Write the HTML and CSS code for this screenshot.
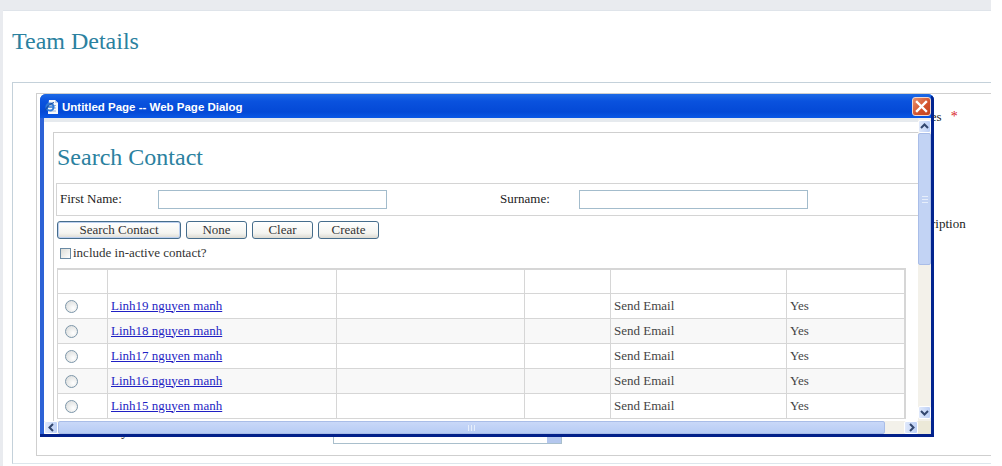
FILE: index.html
```html
<!DOCTYPE html>
<html lang="en">
<head>
<meta charset="utf-8">
<title>Team Details</title>
<link rel="stylesheet" href="styles.css">
</head>
<body>
<main class="page">
  <h1 class="page-title">Team Details</h1>
  <section class="outer">
    <div class="inner">
      <div class="behind-row behind-first"><span class="behind-label">Roles</span><span class="req">*</span></div>
      <div class="behind-row behind-second"><span class="behind-label">Description</span></div>
      <div class="behind-row behind-third"><span class="behind-key">Key</span><span class="behind-select"><span class="behind-arrow"></span></span></div>
    </div>
  </section>
</main>

<div class="dialog">
  <header class="titlebar">
    <svg class="ie-icon" width="16" height="16" viewBox="0 0 16 16">
      <path d="M5 1h6l3 3v11H4V9z" fill="#f6f8fb"/>
      <path d="M11 1v3h3" fill="#c4d2e8"/>
      <path d="M6 6.5h6M8 9h4M6 12h6" stroke="#9db4d6" stroke-width="1"/>
      <circle cx="6" cy="8" r="3.6" fill="none" stroke="#2f7ad6" stroke-width="2"/>
      <path d="M2.6 8h6.6" stroke="#2f7ad6" stroke-width="1.4"/>
      <path d="M1 11.5C3 8 6 4.5 10 3.5" fill="none" stroke="#174ea6" stroke-width="1.2"/>
    </svg>
    <span class="titlebar-text">Untitled Page -- Web Page Dialog</span>
    <button class="close" type="button" aria-label="Close">
      <svg width="13" height="13" viewBox="0 0 13 13"><path d="M2 2l9 9M11 2l-9 9" stroke="#fff" stroke-width="2.4" stroke-linecap="square"/></svg>
    </button>
  </header>
  <div class="client">
    <div class="viewport">
      <div class="strip"></div>
      <div class="box">
        <h2 class="dialog-title">Search Contact</h2>
        <div class="filter">
          <label class="f-label f-first">First Name:</label>
          <input class="f-input" type="text">
          <label class="f-label f-second">Surname:</label>
          <input class="f-input" type="text">
        </div>
        <div class="actions">
          <button class="btn btn-default" type="button">Search Contact</button>
          <button class="btn" type="button">None</button>
          <button class="btn" type="button">Clear</button>
          <button class="btn" type="button">Create</button>
        </div>
        <div class="inactive"><span class="check"></span><span>include in-active contact?</span></div>
        <table class="grid">
          <colgroup>
            <col class="c1"><col class="c2"><col class="c3"><col class="c4"><col class="c5"><col class="c6"><col class="c7">
          </colgroup>
          <thead><tr><th></th><th></th><th></th><th></th><th></th><th></th><th></th></tr></thead>
          <tbody>
            <tr><td class="rc"><span class="radio"></span></td><td><a href="#">Linh19 nguyen manh</a></td><td></td><td></td><td>Send Email</td><td>Yes</td><td></td></tr>
            <tr class="alt"><td class="rc"><span class="radio"></span></td><td><a href="#">Linh18 nguyen manh</a></td><td></td><td></td><td>Send Email</td><td>Yes</td><td></td></tr>
            <tr><td class="rc"><span class="radio"></span></td><td><a href="#">Linh17 nguyen manh</a></td><td></td><td></td><td>Send Email</td><td>Yes</td><td></td></tr>
            <tr class="alt"><td class="rc"><span class="radio"></span></td><td><a href="#">Linh16 nguyen manh</a></td><td></td><td></td><td>Send Email</td><td>Yes</td><td></td></tr>
            <tr><td class="rc"><span class="radio"></span></td><td><a href="#">Linh15 nguyen manh</a></td><td></td><td></td><td>Send Email</td><td>Yes</td><td></td></tr>
          </tbody>
        </table>
      </div>
    </div>
    <div class="vscroll">
      <span class="sb-btn sb-v"><svg width="9" height="7" viewBox="0 0 9 7"><path d="M1 5l3.5-3.5L8 5" fill="none" stroke="#33476e" stroke-width="2"/></svg></span>
      <span class="v-thumb"><span class="v-grip"></span></span>
      <span class="v-track"></span>
      <span class="sb-btn sb-v"><svg width="9" height="7" viewBox="0 0 9 7"><path d="M1 2l3.5 3.5L8 2" fill="none" stroke="#33476e" stroke-width="2"/></svg></span>
    </div>
    <div class="hscroll">
      <span class="sb-btn sb-h"><svg width="7" height="9" viewBox="0 0 7 9"><path d="M5 1L1.5 4.5 5 8" fill="none" stroke="#33476e" stroke-width="2"/></svg></span>
      <span class="h-thumb"><span class="h-grip"></span></span>
      <span class="h-track"></span>
      <span class="sb-btn sb-h"><svg width="7" height="9" viewBox="0 0 7 9"><path d="M2 1l3.5 3.5L2 8" fill="none" stroke="#33476e" stroke-width="2"/></svg></span>
    </div>
    <div class="corner"></div>
  </div>
</div>
</body>
</html>
```

FILE: styles.css
```css
* { box-sizing: border-box; }
html, body { margin: 0; height: 466px; overflow: hidden; }
body {
  background: #fff;
  font-family: "Liberation Serif", serif;
  font-size: 13px;
  color: #222;
  position: relative;
}
.page {
  width: 991px;
  height: 466px;
  padding: 10px 0 0 3px;
  background: #e9ebef;
}
.page-title {
  margin: 0;
  height: 72px;
  background: #fff;
  border-top: 1px solid #dfe4ea;
  padding: 15px 0 0 9px;
  font-size: 24px;
  line-height: 30px;
  font-weight: normal;
  color: #2b819f;
}
.outer {
  height: 384px;
  padding: 0 0 2px 9px;
  background: #fff;
}
.inner {
  height: 382px;
  border: 1px solid #c4d1da;
  border-bottom-color: #dde6ec;
  border-right: 0;
  padding: 10px 0 0 23px;
  position: relative;
}
.inner::before {
  content: "";
  display: block;
  height: 361px;
  border: 1px solid #cfcfcf;
  border-right: 0;
  margin-bottom: -363px;
}
.behind-row { position: absolute; white-space: nowrap; }
.behind-first { left: 899px; top: 26px; }
.behind-second { left: 892px; top: 133px; }
.behind-third { left: 93px; top: 341px; width: 500px; height: 20px; }
.req { color: #d9262a; margin-left: 9px; font-size: 14px; }
.behind-select {
  position: absolute;
  left: 227px;
  top: 0;
  width: 229px;
  height: 20px;
  border: 1px solid #a9bfcc;
}
.behind-arrow {
  position: absolute;
  right: 0;
  top: 0;
  bottom: 0;
  width: 14px;
  background: #b4c7ee;
}

.dialog {
  position: absolute;
  left: 40px;
  top: 94px;
  width: 894px;
  height: 343px;
  display: flex;
  flex-direction: column;
  border-radius: 6px 6px 0 0;
  background: #2d62d6;
  overflow: hidden;
}
.titlebar {
  height: 24px;
  flex: none;
  display: flex;
  align-items: center;
  padding: 1px 3px 0 4px;
  background: linear-gradient(#1d6ae6, #0a52de 30%, #0449d6 75%, #0a58e6);
}
.ie-icon { flex: none; }
.titlebar-text {
  margin-left: 2px;
  color: #fff;
  font-family: "Liberation Sans", sans-serif;
  font-size: 11.5px;
  font-weight: bold;
}
.close {
  margin-left: auto;
  margin-top: -1px;
  width: 19px;
  height: 19px;
  padding: 0;
  display: flex;
  align-items: center;
  justify-content: center;
  border: 1px solid #f2d8cc;
  border-radius: 3px;
  background: linear-gradient(135deg, #e9916e, #d2502a 60%, #c24520);
}
.client {
  flex: 1;
  margin: 0 3px 3px 4px;
  background: #fff;
  display: grid;
  grid-template-columns: 874px 13px;
  grid-template-rows: 303px 13px;
}
.dialog::after {
  content: "";
  position: absolute;
  top: 2px;
  right: 0;
  bottom: 0;
  width: 3px;
  background: #02248f;
}
.dialog::before {
  content: "";
  position: absolute;
  left: 0;
  right: 0;
  bottom: 0;
  height: 3px;
  background: #02208a;
  z-index: 1;
}
.viewport { overflow: hidden; background: #fff; }
.strip { height: 4px; background: #e6eaee; }
.box {
  margin: 10px 0 0 9px;
  border: 1px solid #cfcfcf;
  border-right: 0;
  border-bottom: 0;
  height: 400px;
  padding-left: 3px;
}
.dialog-title {
  margin: 0;
  height: 50px;
  padding: 9px 0 0 0;
  font-size: 24px;
  line-height: 30px;
  font-weight: normal;
  color: #2b819f;
}
.filter {
  height: 33px;
  border: 1px solid #d4d4d4;
  border-width: 1px 0 1px 1px;
  margin-left: -1px;
  padding: 0 0 1px 3px;
  display: flex;
  align-items: center;
}
.f-label { display: block; }
.f-first { width: 98px; }
.f-second { margin-left: 113px; width: 79px; }
.f-input {
  width: 229px;
  height: 19px;
  padding: 0;
  border: 1px solid #a3bccc;
  background: #fff;
  outline: 0;
}
.actions {
  display: flex;
  gap: 5px;
  margin-top: 5px;
  height: 18px;
}
.btn {
  width: 61px;
  height: 18px;
  padding: 0;
  font: 13px "Liberation Serif", serif;
  color: #333;
  border: 1px solid #466d8c;
  border-radius: 3px;
  background: linear-gradient(#fff, #f4f4f0 70%, #dcdad2);
}
.btn-default {
  width: 124px;
  box-shadow: inset 0 0 0 1px #bcd0f0;
}
.inactive {
  display: flex;
  align-items: center;
  height: 12px;
  margin: 8px 0 0 3px;
  gap: 2px;
  color: #333;
}
.check {
  width: 11px;
  height: 11px;
  border: 1px solid #6a8aa4;
  background: linear-gradient(135deg, #dcdcd6, #fff);
}
.grid {
  margin: 9px 0 0 0;
  border-collapse: collapse;
  table-layout: fixed;
  width: 848px;
}
.c1 { width: 50px; }
.c2 { width: 229px; }
.c3 { width: 188px; }
.c4 { width: 86px; }
.c5 { width: 176px; }
.c6 { width: 118px; }
.c7 { width: 1px; }
.grid th, .grid td {
  border: 1px solid #d6d6d6;
  padding: 0 3px;
  height: 25px;
  font-weight: normal;
  text-align: left;
  color: #444;
}
.grid th { height: 24px; border-top-width: 2px; }
.grid .alt td { background: #f8f8f8; }
.grid a { color: #1f1fc4; }
.grid .rc { padding: 0 0 0 7px; }
.radio {
  display: inline-block;
  vertical-align: middle;
  width: 13px;
  height: 13px;
  border: 1px solid #7d97aa;
  border-radius: 50%;
  background: radial-gradient(circle at 65% 65%, #fff, #d5d7d6);
}
.vscroll {
  display: flex;
  flex-direction: column;
  padding: 2px 0;
  background: #f3f1ea;
}
.sb-btn {
  flex: none;
  display: flex;
  align-items: center;
  justify-content: center;
  background: linear-gradient(90deg, #e0e9fb, #bdd0f6);
  border: 1px solid #fff;
  border-radius: 2px;
}
.sb-v { height: 13px; }
.v-thumb {
  flex: none;
  height: 132px;
  display: flex;
  align-items: center;
  justify-content: center;
  background: #c2d3f4;
  border: 1px solid #a9bde8;
  border-radius: 2px;
}
.v-grip { width: 6px; height: 7px; border-top: 1px solid #e6eefb; border-bottom: 1px solid #e6eefb; background: linear-gradient(#c2d3f4 40%, #e6eefb 40%, #e6eefb 60%, #c2d3f4 60%); }
.v-track { flex: 1; }
.hscroll {
  display: flex;
  background: #f3f1ea;
}
.sb-h { width: 14px; height: 100%; }
.h-thumb {
  flex: none;
  width: 827px;
  display: flex;
  align-items: center;
  justify-content: center;
  background: linear-gradient(#c9d8f8, #b7ccf5);
  border: 1px solid #a9bde8;
  border-radius: 2px;
}
.h-grip { width: 7px; height: 6px; border-left: 1px solid #e6eefb; border-right: 1px solid #e6eefb; background: linear-gradient(90deg, #c2d3f4 40%, #e6eefb 40%, #e6eefb 60%, #c2d3f4 60%); }
.h-track { flex: 1; }
.corner { background: #ece9d8; }
```
